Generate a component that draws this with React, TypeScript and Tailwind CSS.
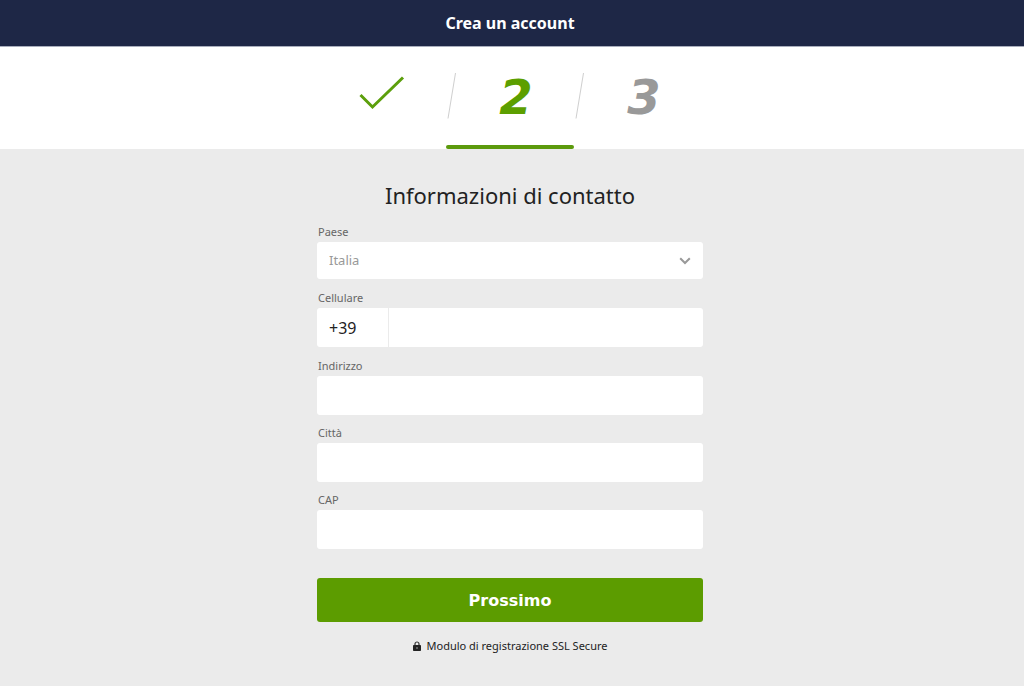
import { useState } from "react";

const FIELDS = [
  { id: "address", label: "Indirizzo" },
  { id: "city", label: "Città" },
  { id: "zip", label: "CAP" },
];

function Separator() {
  return (
    <svg className="absolute left-0 top-[25px] h-12 w-3" viewBox="0 0 12 48" fill="none" aria-hidden="true">
      <path d="M9.5 1L2 46.5" stroke="#cfcfcf" strokeWidth="1" />
    </svg>
  );
}

function Steps() {
  return (
    <ol className="mx-auto grid h-[102px] w-full max-w-96 grid-cols-3 text-center font-['DejaVu_Sans',sans-serif] text-5xl font-bold italic">
      <li className="flex justify-center pt-[29px]">
        <svg width="46" height="34" viewBox="0 0 46 34" fill="none" role="img" aria-label="Completato">
          <path d="M1.5 19L13.5 31L44 1.5" stroke="#5c9f0c" strokeWidth="3" />
        </svg>
      </li>
      <li className="relative flex flex-col justify-between pt-6 leading-[52px] text-[#5c9f00]">
        <Separator />
        <span className="pl-3">2</span>
        <span className="h-1 rounded-full bg-[#5c9a0c]" />
      </li>
      <li className="relative pt-6 leading-[52px] text-[#999999]">
        <Separator />
        <span className="pl-3">3</span>
      </li>
    </ol>
  );
}

export default function App() {
  const [values, setValues] = useState<Record<string, string>>({});

  const update = (id: string, value: string) => setValues((prev) => ({ ...prev, [id]: value }));

  return (
    <div className="min-h-screen bg-[#ebebeb] font-['Noto_Sans',sans-serif] text-[#222222]">
      <header className="flex h-[47px] items-center justify-center border-b border-[#a9aebd] bg-[#1e2746] pr-1">
        <h1 className="text-base font-bold text-white">Crea un account</h1>
      </header>

      <nav aria-label="Passaggi" className="bg-white pr-1">
        <Steps />
      </nav>

      <main className="pr-1">
        <form className="mx-auto w-full max-w-[386px] pt-7 pb-7" onSubmit={(e) => e.preventDefault()}>
          <h2 className="text-center text-[22px] leading-9">Informazioni di contatto</h2>

          {/* Country */}
          <div className="mt-2.5">
            <label htmlFor="country" className="mb-0.5 block pl-px text-[11px] leading-[17px] text-[#666666]">
              Paese
            </label>
            <div className="relative">
              <select
                id="country"
                className="block h-[37px] w-full appearance-none rounded-[3px] bg-white px-3 text-[13px] text-[#999999]"
              >
                <option>Italia</option>
              </select>
              <svg
                className="pointer-events-none absolute right-3 top-[15px]"
                width="12"
                height="8"
                viewBox="0 0 12 8"
                fill="none"
                aria-hidden="true"
              >
                <path d="M1.2 1.2L6 6L10.8 1.2" stroke="#999999" strokeWidth="2" />
              </svg>
            </div>
          </div>

          {/* Mobile number */}
          <div className="mt-2.5">
            <label htmlFor="phone" className="mb-0.5 block pl-px text-[11px] leading-[17px] text-[#666666]">
              Cellulare
            </label>
            <div className="flex h-[39px] overflow-hidden rounded-[3px] bg-white">
              <input
                aria-label="Prefisso"
                defaultValue="+39"
                className="w-[72px] border-r border-[#ebebeb] px-3 text-base"
              />
              <input
                id="phone"
                type="tel"
                value={values.phone ?? ""}
                onChange={(e) => update("phone", e.target.value)}
                className="min-w-0 flex-1 px-3 text-base"
              />
            </div>
          </div>

          {/* Address */}
          <div className="mt-2.5 flex flex-col gap-[9px]">
            {FIELDS.map((field) => (
              <div key={field.id}>
                <label htmlFor={field.id} className="mb-0.5 block pl-px text-[11px] leading-[17px] text-[#666666]">
                  {field.label}
                </label>
                <input
                  id={field.id}
                  value={values[field.id] ?? ""}
                  onChange={(e) => update(field.id, e.target.value)}
                  className="block h-[39px] w-full rounded-[3px] bg-white px-3 text-base"
                />
              </div>
            ))}
          </div>

          <button
            type="submit"
            className="mt-[29px] h-11 w-full rounded-[3px] bg-[#5c9c00] pt-0.5 font-['DejaVu_Sans',sans-serif] text-base font-bold text-white"
          >
            Prossimo
          </button>

          <p className="mt-3.5 flex items-center justify-center gap-1.5 text-[11px] leading-5">
            <svg width="8" height="10" viewBox="0 0 8 10" aria-hidden="true">
              <path d="M2 5V3a2 2 0 0 1 4 0v2" fill="none" stroke="#333333" strokeWidth="1.2" />
              <rect y="4" width="8" height="6" rx="0.8" fill="#222222" />
              <rect x="3.5" y="6" width="1" height="2" fill="#999999" />
            </svg>
            Modulo di registrazione SSL Secure
          </p>
        </form>
      </main>
    </div>
  );
}
